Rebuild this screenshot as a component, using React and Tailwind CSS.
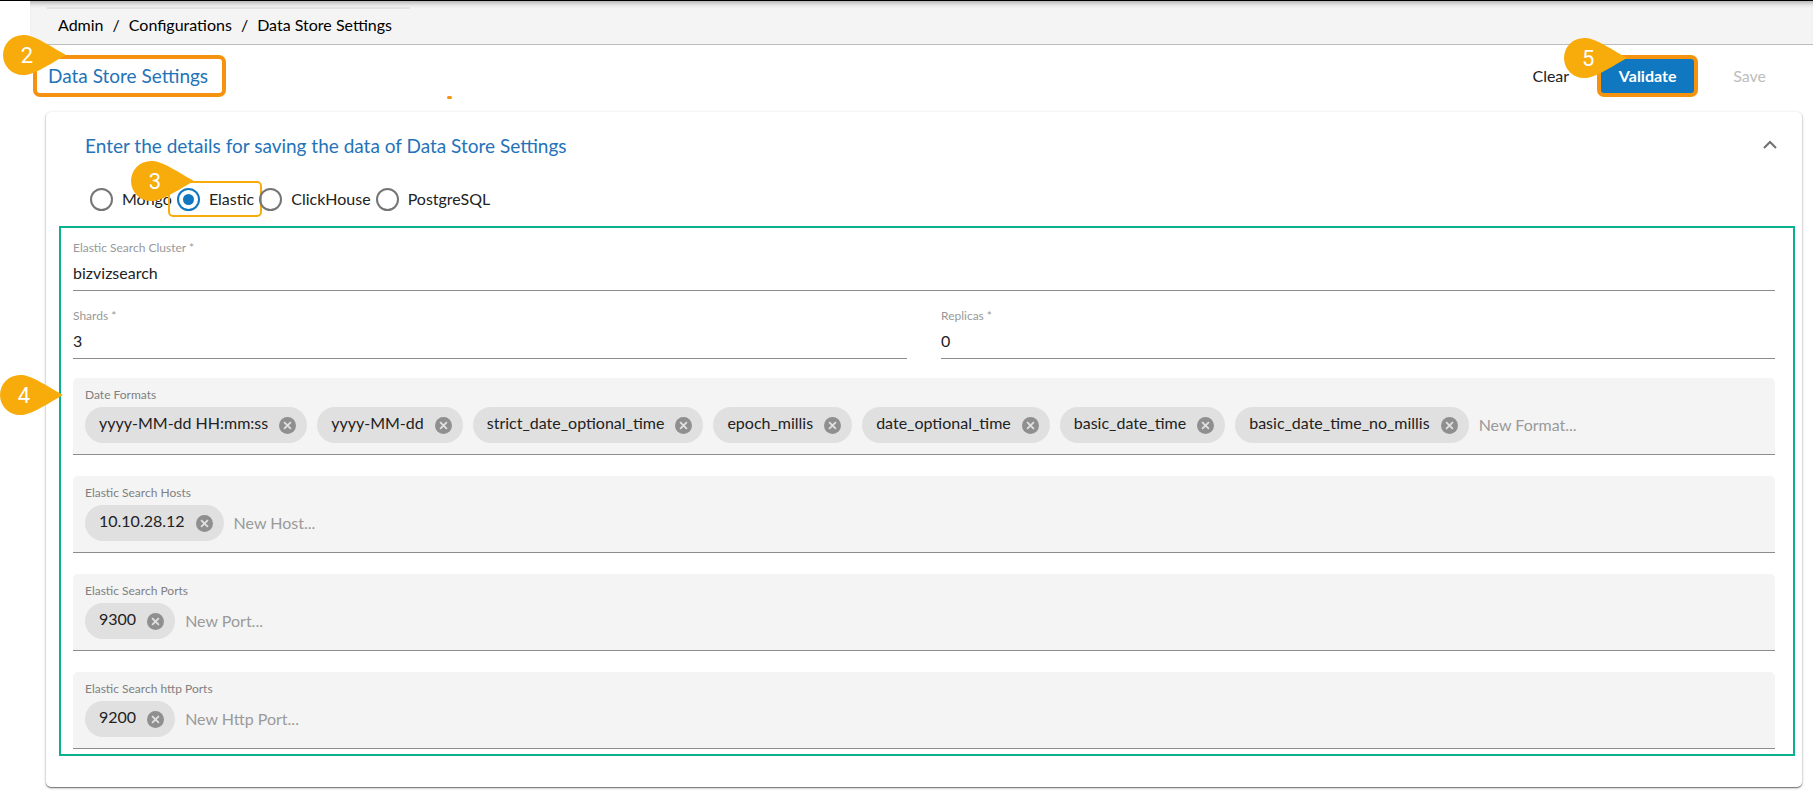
import { useId } from 'react';

const STORES = ['Mongo', 'Elastic', 'ClickHouse', 'PostgreSQL'];

const CHIP_FIELDS = [
  {
    label: 'Date Formats',
    placeholder: 'New Format...',
    chips: [
      'yyyy-MM-dd HH:mm:ss',
      'yyyy-MM-dd',
      'strict_date_optional_time',
      'epoch_millis',
      'date_optional_time',
      'basic_date_time',
      'basic_date_time_no_millis',
    ],
  },
  { label: 'Elastic Search Hosts', placeholder: 'New Host...', chips: ['10.10.28.12'] },
  { label: 'Elastic Search Ports', placeholder: 'New Port...', chips: ['9300'] },
  { label: 'Elastic Search http Ports', placeholder: 'New Http Port...', chips: ['9200'] },
];

// numbered callout, the tip points right
function Pin({ n, className }) {
  return (
    <div className={`absolute z-10 h-10 w-[63px] ${className}`}>
      <svg viewBox="0 0 63 40" className="absolute inset-0 h-full w-full" aria-hidden="true">
        <path d="M20 0C31 0 42 8 63 20C42 32 31 40 20 40A20 20 0 0 1 20 0Z" fill="#f8ac0c" />
      </svg>
      <span className="relative flex h-10 w-12 items-center justify-center font-[Roboto,sans-serif] text-[22px] text-white">
        {n}
      </span>
    </div>
  );
}

function TextField({ label, value }) {
  const id = useId();
  return (
    <div className="flex min-w-0 flex-1 flex-col border-b border-[#8c8c8c]">
      <label htmlFor={id} className="text-xs text-[#999]">{label} *</label>
      <input id={id} defaultValue={value} className="my-[5px] h-6 w-full bg-transparent text-base outline-none" />
    </div>
  );
}

function Chip({ text }) {
  return (
    <span className="flex h-9 items-center gap-[11px] rounded-full bg-[#e0e0e0] pr-[11px] pl-[14px]">
      <span className="pb-1">{text}</span>
      <button type="button" aria-label={`Remove ${text}`}>
        <svg viewBox="0 0 20 20" className="h-[17px] w-[17px]">
          <circle cx="10" cy="10" r="10" fill="#8f8f8f" />
          <path d="M6 6L14 14M14 6L6 14" stroke="#e0e0e0" strokeWidth="2.2" />
        </svg>
      </button>
    </span>
  );
}

function ChipField({ label, placeholder, chips }) {
  const id = useId();
  return (
    <div className="rounded-t-[5px] border-b border-[#8c8c8c] bg-[#f4f4f4] px-3 pt-[9px] pb-[11px]">
      <label htmlFor={id} className="block h-5 text-xs leading-4 text-[#808080]">{label}</label>
      <div className="flex items-center gap-[10px]">
        {chips.map((c) => <Chip key={c} text={c} />)}
        <input
          id={id}
          placeholder={placeholder}
          className="min-w-0 flex-1 bg-transparent text-base outline-none placeholder:text-[#9a9a9a]"
        />
      </div>
    </div>
  );
}

export default function App() {
  return (
    <div className="relative bg-white pb-[10px] font-[Lato,sans-serif] text-base text-[#222]">
      <div className="h-px bg-black" />
      <nav className="relative ml-[30px] flex h-11 items-center gap-[9px] border-b border-[#bdbdbd] bg-[#f4f4f4] pt-1 pl-7 text-black shadow-[inset_0_6px_5px_-4px_#aaa]">
        <span className="absolute top-1.5 left-[17px] h-0.5 w-[363px] bg-[#e2e2e2]" />
        <a href="#admin">Admin</a>
        <span>/</span>
        <a href="#configurations">Configurations</a>
        <span>/</span>
        <a href="#data-store">Data Store Settings</a>
      </nav>

      <header className="relative flex h-[67px] items-center justify-between pr-[47px] pb-[5px] pl-[33px]">
        <div className="relative">
          <h1 className="flex h-[42px] w-[193px] items-center rounded-[7px] border-4 border-[#f59311] pl-[11px] text-[19px] text-[#2473b8]">
            Data Store Settings
          </h1>
          <Pin n={2} className="-top-5 -left-[30px]" />
        </div>
        <span className="absolute top-[51px] left-[447px] h-[3px] w-[5px] rounded-full bg-[#f59311]" />
        <div className="flex items-center">
          <button type="button" className="mr-7">Clear</button>
          <div className="relative mr-[35px]">
            <button type="button" className="h-[42px] w-[101px] rounded-[7px] border-4 border-[#f59311] bg-[#1077c1] font-bold text-white">
              Validate
            </button>
            <Pin n={5} className="-top-[17px] -left-[33px]" />
          </div>
          <button type="button" disabled className="text-[#bdbdbd]">Save</button>
        </div>
      </header>

      <main className="mr-[11px] ml-[46px] rounded-[5px] bg-white px-[13px] pb-[31px] shadow-[0_1px_3px_rgba(0,0,0,0.3),0_1px_1px_rgba(0,0,0,0.4)]">
        <div className="flex items-center justify-between pt-5 pr-3 pl-[26px]">
          <h2 className="text-[19px] leading-7 text-[#2473b8]">Enter the details for saving the data of Data Store Settings</h2>
          <button type="button" aria-label="Collapse">
            <svg viewBox="0 0 14 9" className="mb-1 h-[9px] w-[14px]" fill="none" stroke="#707070" strokeWidth="2">
              <path d="M1 8L7 2L13 8" />
            </svg>
          </button>
        </div>

        <div className="flex gap-[5px] pt-[21px] pb-[9px] pl-[31px]">
          {STORES.map((s) => (
            <label key={s} className="relative flex h-9 items-center gap-[9px]">
              <input
                type="radio"
                name="store"
                defaultChecked={s === 'Elastic'}
                className="h-[23px] w-[23px] appearance-none rounded-full border-2 border-[#757575] bg-clip-content p-1 checked:border-[#1077c1] checked:bg-[#1077c1]"
              />
              {s}
              {s === 'Elastic' && (
                <>
                  <span className="absolute inset-y-0 -right-2 -left-[9px] rounded-[5px] border-2 border-[#f8ac0c]" />
                  <Pin n={3} className="-top-5 -left-[46px]" />
                </>
              )}
            </label>
          ))}
        </div>

        <section className="relative mr-[-6px] border-2 border-[#0ab090] pt-3 pr-[18px] pb-[5px] pl-3">
          <Pin n={4} className="top-[147px] -left-[61px]" />
          <div className="flex">
            <TextField label="Elastic Search Cluster" value="bizvizsearch" />
          </div>
          <div className="mt-[17px] mb-[19px] flex gap-[34px]">
            <TextField label="Shards" value="3" />
            <TextField label="Replicas" value="0" />
          </div>
          <div className="flex flex-col gap-[21px]">
            {CHIP_FIELDS.map((f) => <ChipField key={f.label} {...f} />)}
          </div>
        </section>
      </main>
    </div>
  );
}
